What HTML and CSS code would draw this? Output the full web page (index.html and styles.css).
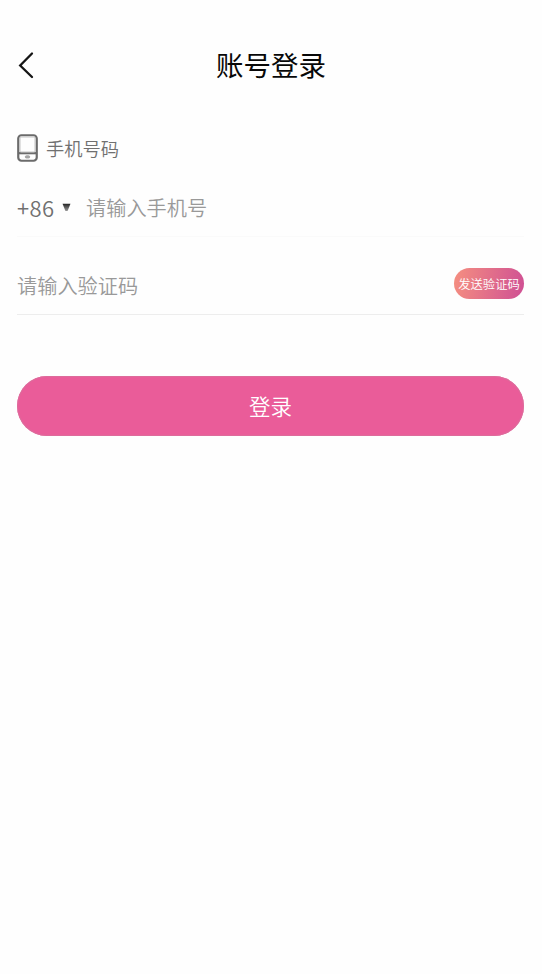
FILE: index.html
```html
<!DOCTYPE html>
<html lang="zh-CN">
<head>
<meta charset="utf-8">
<title>账号登录</title>
<link rel="stylesheet" href="styles.css">
</head>
<body>
<header class="header">
  <button class="back" type="button" aria-label="返回">
    <svg width="18" height="28" viewBox="0 0 18 28"><path d="M15 2.5 3.2 14.5 15 26"/></svg>
  </button>
  <h1 class="title">账号登录</h1>
</header>
<main class="form">
  <div class="label">
    <svg class="phone" width="21" height="28" viewBox="0 0 21 28"><rect x="1.25" y="1.25" width="18.5" height="25.5" rx="3.2"/><path d="M1.5 19.2h18"/><rect class="screen" x="3" y="3" width="15" height="15" rx="1"/><rect class="key" x="8.3" y="21.8" width="4.4" height="2.2" rx="1"/></svg>
    <span>手机号码</span>
  </div>
  <div class="row row-phone">
    <span class="code">+86</span>
    <svg class="caret" width="9" height="9" viewBox="0 0 10 9"><defs><linearGradient id="caret" x2="0" y2="1"><stop stop-color="#222"/><stop offset="1" stop-color="#999"/></linearGradient></defs><path d="M.6.2h8.8L6.2 8.4H3.8z" fill="url(#caret)"/></svg>
    <span class="hint">请输入手机号</span>
  </div>
  <div class="row row-verify">
    <span class="hint">请输入验证码</span>
    <button class="send" type="button">发送验证码</button>
  </div>
  <button class="login" type="button">登录</button>
</main>
</body>
</html>
```
FILE: styles.css
```css
* {
  box-sizing: border-box;
}

body {
  margin: 0;
  background: #fefefe;
  color: #707070;
  font-family: "Noto Sans CJK SC", sans-serif;
}

button {
  border: 0;
  padding: 0;
  font-family: inherit;
}

svg {
  display: block;
  flex: none;
}

.header {
  display: grid;
  grid-template-columns: 36px 1fr 36px;
  align-items: center;
  height: 130px;
  padding: 0 17px;
}

.back {
  background: none;
}

.back path {
  fill: none;
  stroke: #151515;
  stroke-width: 2.3;
  stroke-linecap: round;
}

.title {
  margin: 0;
  padding-bottom: 3px;
  color: #080808;
  font-size: 27.5px;
  font-weight: 400;
  line-height: 40px;
  text-align: center;
}

.form {
  padding: 4px 18px 0 17px;
}

.label {
  display: flex;
  align-items: center;
  gap: 8px;
  height: 28px;
  font-size: 18.3px;
  font-weight: 350;
}

.phone {
  fill: none;
  stroke: #6b6b6b;
  stroke-width: 2.2;
}

.phone .screen {
  stroke: #c4c4c4;
  stroke-width: 1;
}

.phone .key {
  fill: #aaa;
  stroke: #999;
  stroke-width: .8;
}

.row {
  display: flex;
  align-items: center;
}

.row-phone {
  height: 75px;
  padding-top: 16px;
  border-bottom: 1px solid #fafafa;
}

.row-verify {
  justify-content: space-between;
  height: 78px;
  padding-top: 16px;
  border-bottom: 1px solid #ededed;
}

.code {
  width: 45px;
  font-size: 22px;
  font-weight: 350;
  letter-spacing: .4px;
}

.hint {
  color: #999;
  font-size: 20.2px;
  font-weight: 350;
}

.row-verify .hint {
  padding-top: 3px;
}

.caret + .hint {
  margin-left: 15px;
}

.send {
  width: 70px;
  height: 31px;
  border-radius: 16px;
  background: linear-gradient(100deg, #f58f80, #cf4f94);
  color: #fff;
  font-size: 12.3px;
  font-weight: 350;
  white-space: nowrap;
}

.login {
  display: block;
  width: 100%;
  height: 60px;
  margin-top: 61px;
  padding-bottom: 2px;
  border-radius: 30px;
  background: #ea5c99;
  box-shadow: inset 0 0 1px 1px #dc6d9c;
  color: #fff;
  font-size: 21.5px;
  font-weight: 350;
}
```
